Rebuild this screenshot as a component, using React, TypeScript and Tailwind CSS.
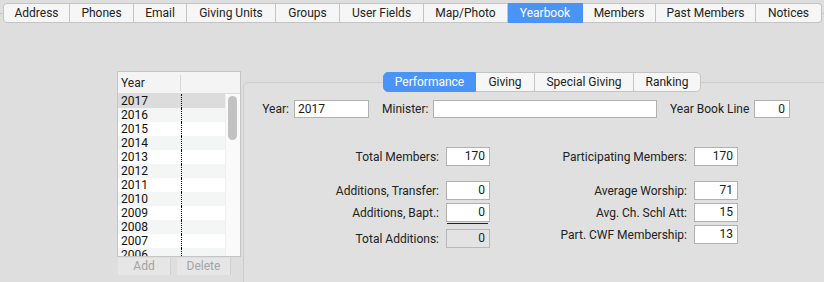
import React from "react";

const tabs = [
  { label: "Address", w: 67 },
  { label: "Phones", w: 64 },
  { label: "Email", w: 53 },
  { label: "Giving Units", w: 89 },
  { label: "Groups", w: 64 },
  { label: "User Fields", w: 84 },
  { label: "Map/Photo", w: 84 },
  { label: "Yearbook", w: 75 },
  { label: "Members", w: 73 },
  { label: "Past Members", w: 100 },
  { label: "Notices", w: 66 },
];

const years = ["2017", "2016", "2015", "2014", "2013", "2012", "2011", "2010", "2009", "2008", "2007", "2006"];

const segs = [
  { label: "Performance", w: 93 },
  { label: "Giving", w: 59 },
  { label: "Special Giving", w: 99 },
  { label: "Ranking", w: 67 },
];

function Field({ label, value, disabled }: { label: string; value: string; disabled?: boolean }) {
  return (
    <div className="flex items-center justify-end gap-[7px] h-[19px]">
      <span className="text-[#222] whitespace-nowrap">{label}</span>
      <div
        className={
          disabled
            ? "w-[44px] h-[19px] shrink-0 border border-[#b8b8b8] bg-[#e3e3e3] text-right pr-[4px] leading-[17px] text-[#262626]"
            : "w-[44px] h-[19px] shrink-0 border border-[#b1b1b1] bg-white text-right pr-[4px] leading-[17px] text-[#1a1a1a]"
        }
      >
        {value}
      </div>
    </div>
  );
}

export default function App() {
  return (
    <div
      className="relative w-[824px] h-[282px] overflow-hidden bg-[#dedede] text-[12px] text-[#222]"
      style={{ fontFamily: "Roboto, 'Liberation Sans', sans-serif" }}
    >
      <div className="absolute left-0 right-0 top-[13px] h-px bg-[#c9c9c9]" />
      <div className="relative ml-[3px] mt-[3px] flex h-[20px]">
        {tabs.map((t, i) => {
          const sel = t.label === "Yearbook";
          const first = i === 0;
          const last = i === tabs.length - 1;
          return (
            <div
              key={t.label}
              style={{ width: t.w }}
              className={
                "flex shrink-0 items-center justify-center h-[20px] border-y border-r " +
                (first ? "border-l rounded-l-[4px] " : "") +
                (last ? "rounded-r-[4px] " : "") +
                (sel
                  ? "bg-[#4a94f7] border-[#4a94f7] text-white"
                  : "bg-[#f6f6f6] border-[#c4c4c4] text-[#222]")
              }
            >
              {t.label}
            </div>
          );
        })}
      </div>

      <div className="flex mt-[48px] pl-[117px]">
        {/* Year list */}
        <div className="flex flex-col w-[124px] shrink-0">
          <div className="h-[186px] border border-[#c5c5c5] bg-white overflow-hidden flex flex-col">
            <div className="h-[22px] shrink-0 flex bg-[#f4f4f4] border-b border-[#dcdcdc]">
              <div className="w-[63px] pl-[3px] leading-[22px] flex items-center">
                <span className="flex-1">Year</span>
                <div className="w-px h-[16px] bg-[#d6d6d6]" />
              </div>
              <div className="flex-1" />
            </div>
            <div className="flex flex-1 overflow-hidden">
              <div className="w-[107px] flex flex-col overflow-hidden">
                {years.map((y, i) => (
                  <div
                    key={y}
                    className={
                      "flex h-[14px] shrink-0 " +
                      (i === 0 ? "bg-[#dcdcdc]" : i % 2 === 1 ? "bg-[#f4f5f5]" : "bg-white")
                    }
                  >
                    <div className="w-[63px] pl-[3px] leading-[14px] text-[#111]">{y}</div>
                    <div className="flex-1 border-l border-dotted border-black" />
                  </div>
                ))}
              </div>
              <div className="flex-1 bg-[#fafafa] border-l border-[#efefef] pt-[2px] pl-[2px]">
                <div className="w-[9px] h-[44px] rounded-full bg-[#c2c2c2]" />
              </div>
            </div>
          </div>
          <div className="flex gap-[6px] pl-[1px] mt-[1px]">
            <div className="w-[53px] h-[17px] bg-[#e6e6e6] border-r border-[#d0d0d0] text-[#a3a3a3] flex items-center justify-center leading-[17px]">
              Add
            </div>
            <div className="w-[54px] h-[17px] bg-[#e6e6e6] border-r border-[#d0d0d0] text-[#a3a3a3] flex items-center justify-center leading-[17px]">
              Delete
            </div>
          </div>
        </div>

        {/* Group box */}
        <div className="relative shrink-0 ml-[2px] mt-[11px] w-[600px] h-[260px] border border-[#cdcdcd] rounded-[5px] bg-[#e0e0e0]">
          <div className="absolute top-[-11px] left-[139px] flex h-[20px]">
            {segs.map((s, i) => {
              const sel = i === 0;
              const last = i === segs.length - 1;
              return (
                <div
                  key={s.label}
                  style={{ width: s.w }}
                  className={
                    "flex shrink-0 items-center justify-center h-[20px] border-y border-r " +
                    (i === 0 ? "border-l rounded-l-[5px] " : "") +
                    (last ? "rounded-r-[5px] " : "") +
                    (sel
                      ? "bg-[#4a94f7] border-[#4a94f7] text-white"
                      : "bg-[#f6f6f6] border-[#c4c4c4] text-[#222]")
                  }
                >
                  {s.label}
                </div>
              );
            })}
          </div>

          <div className="flex items-center h-[18px] mt-[17px]">
            <div className="w-[45px] shrink-0 text-right">Year:</div>
            <div className="ml-[5px] w-[75px] shrink-0 h-[18px] border border-[#b1b1b1] bg-white pl-[3px] leading-[16px] text-[#1a1a1a]">
              2017
            </div>
            <div className="ml-[13px] w-[46px] shrink-0">Minister:</div>
            <div className="ml-[5px] w-[224px] shrink-0 h-[18px] border border-[#b1b1b1] bg-white" />
            <div className="ml-[13px] w-[79px] shrink-0 whitespace-nowrap">Year Book Line</div>
            <div className="ml-[5px] w-[36px] shrink-0 h-[18px] border border-[#b1b1b1] bg-white text-right pr-[4px] leading-[16px] text-[#1a1a1a]">
              0
            </div>
          </div>

          <div className="flex mt-[29px] ml-[56px] gap-[58px]">
            <div className="w-[190px] shrink-0 flex flex-col">
              <Field label="Total Members:" value="170" />
              <div className="mt-[15px]">
                <Field label="Additions, Transfer:" value="0" />
              </div>
              <div className="mt-[3px]">
                <Field label="Additions, Bapt.:" value="0" />
              </div>
              <div className="self-end mr-[2px] mt-[1px] w-[41px] h-px bg-[#222]" />
              <div className="mt-[5px]">
                <Field label="Total Additions:" value="0" disabled />
              </div>
            </div>
            <div className="w-[190px] shrink-0 flex flex-col">
              <Field label="Participating Members:" value="170" />
              <div className="mt-[15px]">
                <Field label="Average Worship:" value="71" />
              </div>
              <div className="mt-[3px]">
                <Field label="Avg. Ch. Schl Att:" value="15" />
              </div>
              <div className="mt-[3px]">
                <Field label="Part. CWF Membership:" value="13" />
              </div>
            </div>
          </div>
        </div>
      </div>
    </div>
  );
}
